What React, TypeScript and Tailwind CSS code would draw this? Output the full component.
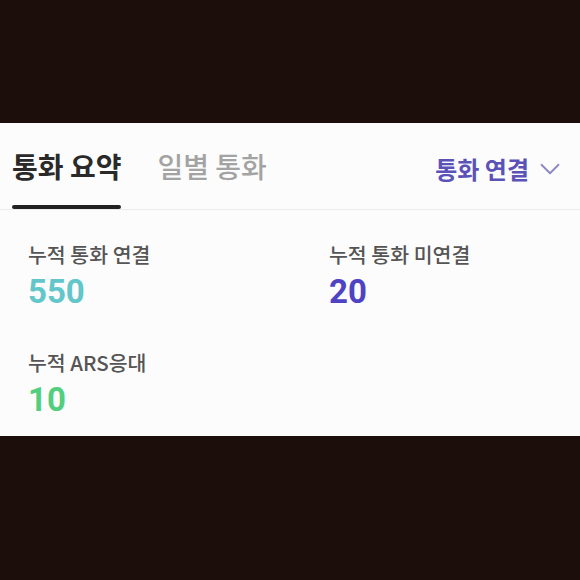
import { ChevronDown } from 'lucide-react';

const font = { fontFamily: '"Noto Sans CJK KR", "Noto Sans", sans-serif' };
const numFont = { fontFamily: 'Roboto, "Noto Sans", sans-serif' };

const stats = [
  { label: '누적 통화 연결', value: 550, color: 'text-[#62c6cb]' },
  { label: '누적 통화 미연결', value: 20, color: 'text-[#4f43c4]' },
  { label: '누적 ARS응대', value: 10, color: 'text-[#52cf7e]' },
];

export default function App() {
  return (
    <div className="w-[580px] h-[580px] bg-[#1c0e0b] flex flex-col" style={font}>
      <div className="h-[123px]" />
      <div className="bg-[#fcfcfc]">
        <div className="flex items-start justify-between border-b border-[#ececec] pl-3 pr-[13px] pt-[25px]">
          <div className="flex gap-9">
            <div className="flex flex-col">
              <span className="text-[28px] leading-9 font-bold text-[#2a2a2a]">통화 요약</span>
              <div className="mt-[21px] h-1 rounded-full bg-[#222]" />
            </div>
            <span className="text-[28px] leading-9 font-medium text-[#a3a3a3]">일별 통화</span>
          </div>
          <div className="flex items-center gap-[4px] mt-[3px]">
            <span className="text-[24px] leading-9 font-bold text-[#5b52b8]">통화 연결</span>
            <ChevronDown className="w-[34px] h-[34px] text-[#8b86c4]" strokeWidth={1.3} />
          </div>
        </div>
        <div className="grid grid-cols-[301px_1fr] pl-[28px] pt-[29px] pb-[18px] gap-y-[37px]">
          {stats.map((s) => (
            <div key={s.label} className="flex flex-col">
              <span className="text-[20.5px] leading-[30px] font-medium text-[#555]">{s.label}</span>
              <span className={`mt-[5px] text-[33px] leading-[36px] font-bold ${s.color}`} style={numFont}>
                {s.value}
              </span>
            </div>
          ))}
        </div>
      </div>
    </div>
  );
}
